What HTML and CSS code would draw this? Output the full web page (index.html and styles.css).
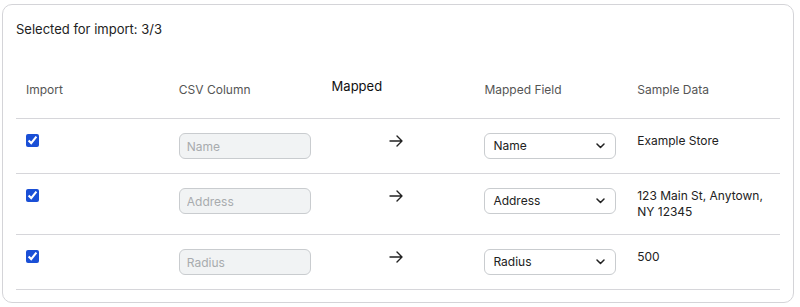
FILE: index.html
```html
<!DOCTYPE html>
<html lang="en">
  <head>
    <meta charset="UTF-8" />
    <title>Column Mapping</title>
    <link rel="stylesheet" href="styles.css">
  </head>
  <body>
    <section class="card">
      <p class="summary">Selected for import: 3/3</p>
      <table class="mapping">
        <thead>
          <tr>
            <th>Import</th>
            <th>CSV Column</th>
            <th class="th-mapped">Mapped</th>
            <th>Mapped Field</th>
            <th>Sample Data</th>
          </tr>
        </thead>
        <tbody>
          <tr>
            <td><input type="checkbox" checked /></td>
            <td><input class="csv-input" type="text" placeholder="Name" disabled /></td>
            <td class="arrow-cell">
              <svg width="15" height="12" viewBox="0 0 15 12"><path d="M1 6h12M8 1l5 5-5 5" fill="none" stroke="#222" stroke-width="1.4" stroke-linecap="round" stroke-linejoin="round"/></svg>
            </td>
            <td>
              <div class="select">
                <span>Name</span>
                <svg width="9" height="6" viewBox="0 0 9 6"><path d="M1 1l3.5 3.5L8 1" fill="none" stroke="#222" stroke-width="1.5" stroke-linecap="round" stroke-linejoin="round"/></svg>
              </div>
            </td>
            <td class="sample">Example Store</td>
          </tr>
          <tr>
            <td><input type="checkbox" checked /></td>
            <td><input class="csv-input" type="text" placeholder="Address" disabled /></td>
            <td class="arrow-cell">
              <svg width="15" height="12" viewBox="0 0 15 12"><path d="M1 6h12M8 1l5 5-5 5" fill="none" stroke="#222" stroke-width="1.4" stroke-linecap="round" stroke-linejoin="round"/></svg>
            </td>
            <td>
              <div class="select">
                <span>Address</span>
                <svg width="9" height="6" viewBox="0 0 9 6"><path d="M1 1l3.5 3.5L8 1" fill="none" stroke="#222" stroke-width="1.5" stroke-linecap="round" stroke-linejoin="round"/></svg>
              </div>
            </td>
            <td class="sample">123 Main St, Anytown, NY 12345</td>
          </tr>
          <tr>
            <td><input type="checkbox" checked /></td>
            <td><input class="csv-input" type="text" placeholder="Radius" disabled /></td>
            <td class="arrow-cell">
              <svg width="15" height="12" viewBox="0 0 15 12"><path d="M1 6h12M8 1l5 5-5 5" fill="none" stroke="#222" stroke-width="1.4" stroke-linecap="round" stroke-linejoin="round"/></svg>
            </td>
            <td>
              <div class="select">
                <span>Radius</span>
                <svg width="9" height="6" viewBox="0 0 9 6"><path d="M1 1l3.5 3.5L8 1" fill="none" stroke="#222" stroke-width="1.5" stroke-linecap="round" stroke-linejoin="round"/></svg>
              </div>
            </td>
            <td class="sample">500</td>
          </tr>
        </tbody>
      </table>
    </section>
  </body>
</html>
```

FILE: styles.css
```css
* {
  margin: 0;
  padding: 0;
  box-sizing: border-box;
}

body {
  font-family: Inter, "Liberation Sans", sans-serif;
  background: #fff;
  color: #222;
  padding: 4px 6px 0 2px;
}

/* Carte */
.card {
  border: 1px solid #d4d4d8;
  border-radius: 10px;
  padding: 16px 13px 13px;
  height: 299px;
}

.summary {
  font-size: 13px;
  line-height: 16px;
  margin-bottom: 25px;
}

/* Tableau */
.mapping {
  width: 100%;
  table-layout: fixed;
  border-collapse: collapse;
  font-size: 12px;
}

.mapping th {
  font-weight: normal;
  text-align: left;
  color: #555;
  line-height: 16px;
  padding: 20px 10px 20px;
  vertical-align: bottom;
  border-bottom: 1px solid #d6d6da;
}

.mapping th.th-mapped {
  color: #111;
  font-size: 13px;
  padding: 16px 10px 24px;
}

.mapping td {
  padding: 14px 10px 14px;
  vertical-align: top;
  line-height: 16px;
  border-bottom: 1px solid #d6d6da;
}

.mapping input[type="checkbox"] {
  width: 13px;
  height: 13px;
  margin: 1px 0 0;
  accent-color: #1a4fd6;
  display: block;
}

.csv-input {
  width: 132px;
  height: 26px;
  border: 1px solid #c9cccf;
  border-radius: 6px;
  background: #f1f3f4;
  padding: 0 7px;
  font-family: inherit;
  font-size: 12px;
  display: block;
}
.csv-input::placeholder {
  color: #a8abae;
}

.arrow-cell {
  text-align: center;
}
.arrow-cell svg {
  display: inline-block;
  margin: 2px 0 0 -3px;
}

.select {
  width: 132px;
  height: 26px;
  border: 1px solid #c9cccf;
  border-radius: 6px;
  background: #fff;
  padding: 0 10px 0 8px;
  display: flex;
  align-items: center;
  justify-content: space-between;
  color: #222;
}

.sample {
  color: #222;
}
```
